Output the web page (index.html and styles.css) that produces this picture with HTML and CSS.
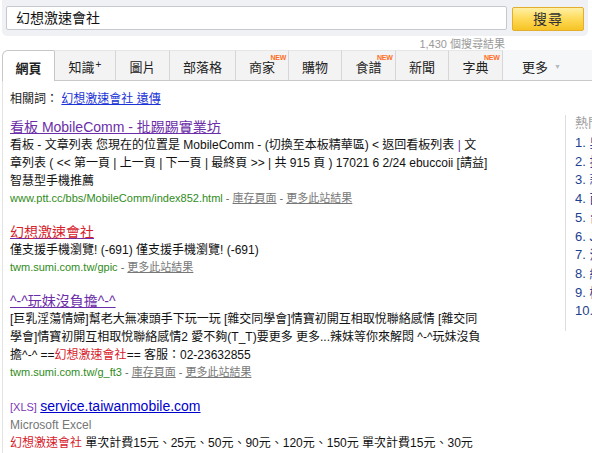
FILE: index.html
```html
<!DOCTYPE html>
<html lang="zh-Hant">
<head>
<meta charset="utf-8">
<title>幻想激速會社 - 搜尋</title>
<link rel="stylesheet" href="styles.css">
</head>
<body>
<div class="page">
  <form class="searchbar">
    <div class="query">幻想激速會社</div>
    <button type="button" class="btn">搜尋</button>
  </form>
  <div class="count">1,430 個搜尋結果</div>
  <nav class="tabs">
    <a class="tab active w53">網頁</a>
    <a class="tab w61">知識<span class="plus">+</span></a>
    <a class="tab w54">圖片</a>
    <a class="tab w66">部落格</a>
    <a class="tab w53"><span class="lbl">商家<span class="new">NEW</span></span></a>
    <a class="tab w53">購物</a>
    <a class="tab w54"><span class="lbl">食譜<span class="new">NEW</span></span></a>
    <a class="tab w53">新聞</a>
    <a class="tab w54"><span class="lbl">字典<span class="new">NEW</span></span></a>
    <a class="tab more">更多 <span class="caret">▼</span></a>
  </nav>
  <div class="body">
    <main class="main">
      <div class="related">相關詞： <a href="#">幻想激速會社 遠傳</a></div>

      <div class="result">
        <a class="title visited" href="#">看板 MobileComm - 批踢踢實業坊</a>
        <div class="snip">看板 - 文章列表 您現在的位置是 MobileComm - (切換至本板精華區) &lt; 返回看板列表 <span class="bar">|</span> 文<br>章列表 ( &lt;&lt; 第一頁 | 上一頁 | 下一頁 | 最終頁 &gt;&gt; | 共 915 頁 ) 17021 6 2/24 ebuccoii [請益]<br>智慧型手機推薦</div>
        <div class="url"><span class="green">www.ptt.cc/bbs/MobileComm/index852.html</span> - <a href="#">庫存頁面</a> - <a href="#">更多此站結果</a></div>
      </div>

      <div class="result">
        <a class="title visited" href="#"><span class="hl">幻想激速會社</span></a>
        <div class="snip">僅支援手機瀏覽! (-691) 僅支援手機瀏覽! (-691)</div>
        <div class="url"><span class="green">twm.sumi.com.tw/gpic</span> - <a href="#">更多此站結果</a></div>
      </div>

      <div class="result">
        <a class="title visited" href="#">^-^玩妹沒負擔^-^</a>
        <div class="snip">[巨乳淫蕩情婦]幫老大無凍頭手下玩一玩 [雜交同學會]情寶初開互相取悅聯絡感情 [雜交同<br>學會]情寶初開互相取悅聯絡感情2 愛不夠(T_T)要更多 更多...辣妹等你來解悶 ^-^玩妹沒負<br>擔^-^ ==<span class="hl">幻想激速會社</span>== 客服：02-23632855</div>
        <div class="url"><span class="green">twm.sumi.com.tw/g_ft3</span> - <a href="#">庫存頁面</a> - <a href="#">更多此站結果</a></div>
      </div>

      <div class="result">
        <div class="title-row"><span class="fmt">[XLS]</span> <a class="title blue" href="#">service.taiwanmobile.com</a></div>
        <div class="meta">Microsoft Excel</div>
        <div class="snip"><span class="hl">幻想激速會社</span> 單次計費15元、25元、50元、90元、120元、150元 單次計費15元、30元</div>
      </div>
    </main>
    <aside class="side">
      <div class="side-title">熱門關鍵字</div>
      <ol class="hot">
        <li>1. 吳宗憲</li>
        <li>2. 批踢踢</li>
        <li>3. 蒜頭</li>
        <li>4. 西門町</li>
        <li>5. 台鐵</li>
        <li>6. Jolin</li>
        <li>7. 洋基</li>
        <li>8. 緋聞</li>
        <li>9. 樟腦</li>
        <li>10. 天氣</li>
      </ol>
    </aside>
  </div>
</div>
</body>
</html>
```
FILE: styles.css
```css
html, body {
  margin: 0;
  padding: 0;
  overflow: hidden;
  background: #fff;
}
body {
  font-family: "Liberation Sans", "Noto Sans CJK TC", sans-serif;
  font-size: 12px;
  color: #222;
}
a { color: inherit; }

.page {
  width: 592px;
  height: 453px;
  overflow: hidden;
}

/* search bar */
.searchbar {
  margin: 0 4px 0 2px;
  height: 36px;
  background: #eff1f4;
  border-radius: 0 0 5px 5px;
  display: flex;
  align-items: flex-start;
  padding: 6px 0 0 4px;
  box-sizing: border-box;
  gap: 5px;
}
.query {
  width: 501px;
  height: 24px;
  box-sizing: border-box;
  background: #fff;
  border: 1px solid #c6cad0;
  border-radius: 2px;
  padding-left: 9px;
  font-size: 14px;
  line-height: 22px;
  color: #111;
}
.btn {
  margin-top: 1px;
  width: 72px;
  height: 24px;
  border: 1px solid #e2ae2b;
  border-radius: 2px;
  background: linear-gradient(#fff0a6 0%, #ffdc5e 45%, #f6c324 100%);
  font-family: "Liberation Sans", "Noto Sans CJK TC", sans-serif;
  font-size: 14px;
  color: #333;
  letter-spacing: 1px;
  padding: 0;
  line-height: 20px;
}

.count {
  margin-top: 2px;
  height: 12px;
  width: 505px;
  text-align: right;
  font-size: 11px;
  line-height: 12px;
  color: #9a9a9a;
}

/* tabs */
.tabs {
  display: flex;
  margin-left: 2px;
  height: 30px;
  border-bottom: 1px solid #c9c9c9;
  box-sizing: content-box;
}
.tab {
  display: flex;
  align-items: center;
  justify-content: center;
  box-sizing: border-box;
  height: 30px;
  background: #f3f3f3;
  border-right: 1px solid #d6d6d6;
  border-top: 1px solid #e6e6e6;
  text-decoration: none;
  color: #222;
  font-size: 13px;
  padding-top: 2px;
  flex-shrink: 0;
}
.tab.active {
  background: #fff;
  border: 1px solid #c6c6c6;
  border-bottom: none;
  border-radius: 6px 2px 0 0;
  height: 31px;
  font-weight: bold;
  margin-bottom: -1px;
}
.w53 { width: 53px; }
.w54 { width: 54px; }
.w61 { width: 61px; }
.w66 { width: 66px; }
.tab.more {
  flex: 1 1 auto;
  background: #f6f7f9;
  border-right: none;
  border-top-color: #f6f7f9;
  justify-content: flex-start;
  padding-left: 19px;
}
.plus {
  font-size: 10px;
  position: relative;
  top: -2px;
  margin-left: 1px;
}
.lbl { position: relative; }
.new {
  position: absolute;
  right: -11px;
  top: -3px;
  font-size: 7px;
  line-height: 7px;
  font-weight: bold;
  color: #ff6d1f;
  letter-spacing: -0.3px;
}
.caret {
  font-size: 7px;
  color: #b4b8c0;
  margin-left: 6px;
}

/* body */
.body {
  display: flex;
  margin-left: 2px;
}
.main {
  flex: 0 0 495px;
  border-left: 1px solid #e3e3e3;
  padding: 9px 0 0 7px;
  box-sizing: border-box;
  height: 400px;
}
.related {
  line-height: 18px;
  margin-bottom: 10px;
}
.related a { color: #1b34d6; }

.result { margin-bottom: 17px; }
.title {
  display: inline-block;
  font-size: 14px;
  line-height: 18px;
}
.title.visited { color: #6c2ea8; }
.title.blue { color: #0000cc; }
.title-row { line-height: 18px; }
.fmt { font-size: 11px; color: #7a38b8; }
.hl { color: #d7222c; }
.snip {
  line-height: 18px;
  color: #111;
}
.bar { color: #6c2ea8; }
.url {
  font-size: 11px;
  line-height: 16px;
  color: #666;
}
.green { color: #2f8c1a; }
.url a { color: #777; }
.meta {
  line-height: 18px;
  color: #767676;
}

/* sidebar */
.side {
  flex: 0 0 auto;
  margin-top: 34px;
  margin-left: 68px;
  border-left: 1px solid #dedede;
  padding-left: 9px;
  height: 216px;
  width: 120px;
  white-space: nowrap;
}
.side-title {
  color: #a0a0a0;
  line-height: 16px;
  font-size: 13px;
}
.hot {
  list-style: none;
  margin: 3px 0 0;
  padding: 0;
  color: #1d3f8e;
  font-size: 13px;
}
.hot li {
  line-height: 18.7px;
}
```
